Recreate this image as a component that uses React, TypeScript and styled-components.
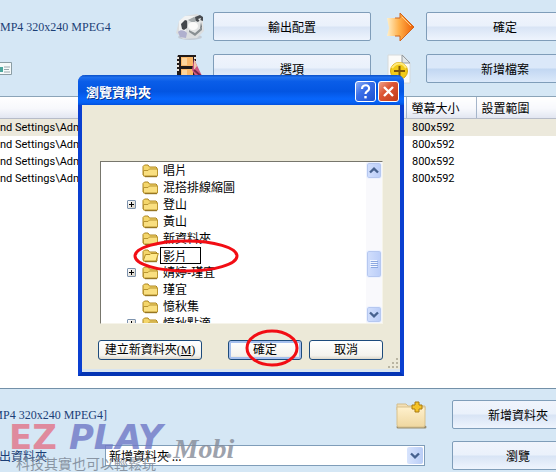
import React from "react";
import styled, { createGlobalStyle, css } from "styled-components";

const ui = `Roboto, "Noto Sans CJK TC", sans-serif`;
const cjk = `"Noto Sans CJK TC", sans-serif`;
const ming = `"Liberation Serif", "Noto Sans CJK TC", serif`;

const GlobalStyle = createGlobalStyle`
  * { box-sizing: border-box; }
  body { margin: 0; background: #d5e7f5; overflow: hidden; }
  button, input, select { font: inherit; color: inherit; margin: 0; }
`;

const Page = styled.div`
  position: relative;
  min-height: 100vh;
  overflow: hidden;
  font: 12px/16px ${cjk};
  color: #000;
  background: #d5e7f5;
`;

/* The main window runs past the right edge of the view. */
const MainWindow = styled.main`
  width: calc(100% + 28px);
`;

const TopPanel = styled.section`
  display: grid;
  grid-template-columns: 176px 37px 1fr 55px 1fr;
  grid-auto-rows: 29px;
  row-gap: 13px;
  height: 96px;
  padding-top: 12px;
  align-content: start;
  align-items: center;
`;

const Profile = styled.span`
  font: 12px/16px ${ming};
  color: #1c3f77;
  white-space: nowrap;
`;

const IconCell = styled.span`
  display: flex;
  padding-left: ${(p: { $pad?: number }) => p.$pad ?? 0}px;
`;

const PanelButton = styled.button<{ $active?: boolean }>`
  width: 100%;
  height: 29px;
  padding: 0;
  border: 1px solid #7f9db9;
  border-radius: 2px;
  line-height: 16px;
  background: ${(p) =>
    p.$active
      ? "linear-gradient(#dbe8f9 0, #dbe8f9 48%, #c2d7f2 52%, #dbe9fa 100%)"
      : "linear-gradient(#f0f4fc 0, #eaf1fb 48%, #d8e4f5 52%, #eef4fd 100%)"};
`;

const TableArea = styled.section`
  height: 293px;
  border-top: 1px solid #8ba4b8;
  border-bottom: 1px solid #7390a8;
  background: #fff;
`;

const Table = styled.table`
  width: 100%;
  border-collapse: collapse;
  table-layout: fixed;
`;

const Th = styled.th`
  height: 21px;
  padding: 1px 0 0 5px;
  font-weight: 400;
  text-align: left;
  background: linear-gradient(#fff, #f7f8fc 55%, #e2e6f1);
  border-bottom: 1px solid #b7bcc8;
  & + & { border-left: 1px solid #a5b5ca; }
`;

const Td = styled.td`
  height: 17px;
  padding: 0 0 0 ${(p: { $pad?: number }) => p.$pad ?? 0}px;
  font: 11px/17px ${ui};
  white-space: nowrap;
`;

const Tr = styled.tr<{ $selected?: boolean }>`
  background: ${(p) => (p.$selected ? "#ece9dc" : "#fff")};
`;

const BottomPanel = styled.section`
  padding: 11px 0 3px;
  display: grid;
  row-gap: 12px;
`;

const FolderRow = styled.div`
  display: grid;
  grid-template-columns: 1fr 56px 132px;
  align-items: center;
`;

const OutputRow = styled.div`
  display: grid;
  grid-template-columns: 105px 1fr 27px 132px;
  align-items: center;
  & > button { grid-column: 4; }
`;

const ClippedLabel = styled.div<{ $width: number }>`
  width: ${(p) => p.$width}px;
  display: flex;
  justify-content: flex-end;
  overflow: hidden;
  white-space: nowrap;
  color: #1c3f77;
`;

const Combo = styled.div`
  position: relative;
  display: flex;
  height: 21px;
`;

const Select = styled.select`
  width: 100%;
  appearance: none;
  border: 1px solid #7f9db9;
  border-radius: 0;
  background: #fff;
  padding: 0 20px 0 3px;
  line-height: 18px;
`;

const ComboArrow = styled.span`
  position: absolute;
  right: 2px;
  top: 2px;
  bottom: 2px;
  width: 16px;
  display: grid;
  place-items: center;
  pointer-events: none;
  background: linear-gradient(90deg, #d8e4fd, #b9cdf6);
  border-radius: 2px;
`;

const Watermark = styled.div`
  position: absolute;
  left: 9px;
  top: 421px;
  width: 240px;
  pointer-events: none;
  white-space: nowrap;
`;

const Brand = styled.div`
  display: flex;
  align-items: flex-start;
  height: 32px;
  line-height: 32px;
  font-family: "DejaVu Sans", sans-serif;
  font-weight: 700;
`;
const BrandEZ = styled.span`
  font-size: 34px;
  color: #e46478;
  opacity: 0.7;
`;
const BrandPlay = styled.span`
  margin-left: 12px;
  font-size: 34px;
  font-style: oblique;
  color: #6f79c6;
  opacity: 0.8;
`;
const BrandMobi = styled.span`
  padding: 12px 0 0 4px;
  font: italic 700 28px/32px "Liberation Serif", serif;
  color: #858b98;
  opacity: 0.8;
`;
const Tagline = styled.div`
  padding-left: 7px;
  font: 14px/20px ${cjk};
  color: #7c8795;
  opacity: 0.85;
`;

const Dialog = styled.section`
  position: absolute;
  left: 78px;
  top: 75px;
  width: 326px;
  border-radius: 7px 7px 0 0;
  background: #ece9d8;
  border: solid #0a3fd0;
  border-width: 0 4px 4px;
  border-bottom-color: #0434b4;
`;

const TitleBar = styled.header`
  display: flex;
  align-items: center;
  gap: 2px;
  height: 30px;
  margin: 0 -4px;
  padding: 3px 5px 0 8px;
  border-radius: 7px 7px 0 0;
  background: linear-gradient(#0a50c8 0, #1f70ee 8%, #0a5de8 22%, #0355e2 55%, #0866fc 80%, #0560f2 92%, #0350dc 100%);
`;

const Title = styled.h1`
  flex: 1;
  margin: 0;
  font: 700 13px/16px ${cjk};
  color: #fff;
  text-shadow: 1px 1px 0 #0a3590;
`;

const CaptionButton = styled.button<{ $close?: boolean }>`
  width: 21px;
  height: 21px;
  padding: 0;
  display: grid;
  place-items: center;
  border: 1px solid #fff;
  border-radius: 3px;
  background: ${(p) =>
    p.$close
      ? "linear-gradient(135deg, #eda28b, #dd5635 40%, #c03a18)"
      : "linear-gradient(135deg, #8eaef5, #3b6fe8 40%, #1d4fd0)"};
`;

const DialogBody = styled.div`
  padding: 56px 17px 9px 16px;
  border-bottom: 3px solid #d9e5f0;
`;

const TreeBox = styled.div`
  display: flex;
  height: 163px;
  margin-left: 2px;
  border: 1px solid #f6f4ea;
  border-top-color: #77766c;
  border-left-color: #77766c;
  background: #fff;
  overflow: hidden;
`;

const Tree = styled.ul`
  flex: 1;
  margin: 0;
  padding: 0 0 0 26px;
  list-style: none;
  overflow: hidden;
`;

const TreeItem = styled.li`
  display: grid;
  grid-template-columns: 15px 17px 1fr;
  align-items: center;
  height: 17px;
  line-height: 16px;
`;

const TreeText = styled.span`
  height: 17px;
  padding-left: 4px;
  white-space: nowrap;
`;

const RenameInput = styled.input`
  width: 41px;
  height: 17px;
  margin-left: 1px;
  padding: 0 2px;
  border: 1px solid #000;
  border-radius: 0;
  background: #fff;
  line-height: 14px;
  outline: none;
`;

const Expander = styled.button`
  width: 9px;
  height: 9px;
  padding: 0;
  display: grid;
  place-items: center;
  border: 1px solid #7d93ae;
  border-radius: 1px;
  background: linear-gradient(135deg, #fff, #d5d0c4);
`;

const ScrollTrack = styled.div`
  width: 16px;
  display: flex;
  flex-direction: column;
  background: #f9f9fc;
`;

const scrollPart = css`
  padding: 0;
  display: grid;
  place-items: center;
  border: 1px solid #eef3ff;
  border-radius: 3px;
  background: linear-gradient(90deg, #d2dffc, #bacdf8);
  box-shadow: inset 0 0 0 1px #b6c8f0;
`;
const ScrollButton = styled.button`
  ${scrollPart}
  height: 17px;
`;
const ScrollThumb = styled.div`
  ${scrollPart}
  height: 28px;
  margin: 71px 0 auto;
`;

const Actions = styled.footer`
  display: grid;
  grid-template-columns: 104px 1fr 74px 74px;
  column-gap: 7px;
  margin-top: 16px;
  & > :nth-child(2) { grid-column: 3; }
`;

const XpButton = styled.button<{ $default?: boolean }>`
  height: 20px;
  padding: 0;
  border: 1px solid #1d4b7c;
  border-radius: 3px;
  background: linear-gradient(#fff, #f4f3ee 80%, #dcd8cc);
  box-shadow: ${(p) => (p.$default ? "inset 0 0 0 2px #a6c0ee" : "none")};
  font: 12px/16px ${ming};
  white-space: nowrap;
`;

const Grip = styled.svg`
  position: absolute;
  right: 1px;
  bottom: 3px;
`;

const Mark = styled.svg<{ $x: number; $y: number }>`
  position: absolute;
  left: ${(p) => p.$x}px;
  top: ${(p) => p.$y}px;
  pointer-events: none;
`;

const Chevron = ({ up = false }: { up?: boolean }) => (
  <svg width="10" height="7" viewBox="0 0 10 7">
    <path d={up ? "M1 5.5 5 1.7 9 5.5" : "M1 1.5 5 5.3 9 1.5"} fill="none" stroke="#47628f" strokeWidth="2.4" />
  </svg>
);

const FolderIcon = ({ open = false }: { open?: boolean }) => (
  <svg width="17" height="15" viewBox="0 0 17 15">
    <path d="M1 12V3.5L2.500 2H6l1.500 2H14l1 1v8H2z" fill="#f4d66b" stroke="#ae8620" />
    {open ? (
      <path d="M1.200 13 3.500 6.500H8L9 5.500h7.300L14 13z" fill="#ffe98c" stroke="#b48e25" />
    ) : (
      <path d="M1.500 13V7.500H6L7.500 6H15.500v7z" fill="#f9df80" stroke="#b99530" />
    )}
    <path d="M3 13.700h12" stroke="#8c6b16" />
  </svg>
);

const CameraIcon = () => (
  <svg width="31" height="28" viewBox="0 0 31 28">
    <ellipse cx="14" cy="24" rx="12" ry="3" fill="#c3cbd4" />
    <path d="M0 20 3 8l6-5 12-2 5 3 2 14-7 7-14 1z" fill="#dcdedf" />
    <path d="m3 8 6-5 10 0-8 7-2 11-6-3z" fill="#f2f3f3" />
    <path d="m5 11 4-4 3 1-1 7-3 2-2-1z" fill="#44484c" />
    <path d="M2 19c2-3 7-2 9 1l-1 5-6-1z" fill="#b0b0ce" />
    <path d="m11 7 9-3 7 4v9l-8 6-7-5z" fill="#e2e4e4" />
    <path d="m12 7 6-3 5 2-6 4z" fill="#a4aaac" />
    <ellipse cx="17" cy="13" rx="5" ry="4" fill="#fbfbfa" />
    <path d="m19 4 5-2 3 2v4l-3-1-2 2-2-1z" fill="#484c50" />
    <path d="m22 6 3-1-1 3z" fill="#e9ecec" />
    <path d="m13 17 6 3 7-6v3l-7 6-6-4z" fill="#898f92" />
    <path d="m25 9 1 5-2 2z" fill="#6f7578" />
  </svg>
);

const FilmIcon = () => (
  <svg width="28" height="28" viewBox="0 0 28 28">
    <path d="M2 0h18v28H1V3z" fill="#211a18" />
    <path d="M5 2h12v9H5zM5 14h12v10H5z" fill="#fbb869" />
    <path d="M6 3h5v7H6zM6 15h5v7H6z" fill="#ffd59b" />
    <path d="M1 3h2M1 7h2M1 11h2M1 15h2M18 3h2M18 7h2M18 11h2" stroke="#eee5d8" strokeWidth="2" />
    <path d="m18 4 9 19-4 5-7-13z" fill="#cf5a83" />
    <path d="m18 4 3 7-3 4z" fill="#f0c8af" />
    <path d="m18 15 7 6" stroke="#742747" strokeWidth="2" />
  </svg>
);

const ArrowIcon = () => (
  <svg width="28" height="30" viewBox="0 0 28 30">
    <defs>
      <linearGradient id="arrow">
        <stop offset="0" stopColor="#fff0ca" />
        <stop offset=".45" stopColor="#ffb04a" />
        <stop offset="1" stopColor="#ee5f04" />
      </linearGradient>
    </defs>
    <path d="M0 6h13V1l14 14-14 14v-5H0l2-8z" fill="url(#arrow)" />
    <path d="M8 6h5V1l14 14-14 14v-5H8" fill="none" stroke="#d0641d" />
    <path d="m15 5 9 9" stroke="#ffd08b" />
  </svg>
);

const AddFileIcon = () => (
  <svg width="25" height="30" viewBox="0 0 25 30">
    <path d="M1 1h15l7 8v20H1z" fill="#fbfbf9" stroke="#d6dadb" />
    <path d="M15 1v8h8z" fill="#e3e7e8" stroke="#929ba1" />
    <circle cx="12" cy="17" r="8.500" fill="#f1ca19" stroke="#d8a910" />
    <path d="M5 14c4-6 11-6 14 0" fill="none" stroke="#ffe979" strokeWidth="2" />
    <path d="M7 17h11M12.500 12v10" stroke="#7d5708" strokeWidth="2" />
  </svg>
);

const AddFolderIcon = () => (
  <svg width="31" height="28" viewBox="0 0 31 28">
    <defs>
      <linearGradient id="folder" x2="0" y2="1">
        <stop stopColor="#fff1cd" />
        <stop offset="1" stopColor="#efd7a0" />
      </linearGradient>
    </defs>
    <path d="M2 26h27" stroke="#998c6c" strokeWidth="3" strokeLinecap="round" />
    <path d="M1 3h9l2 2h17v4H1z" fill="#f3e0b6" stroke="#d3bd8c" />
    <path d="M1 6h28v18l-1 2H2l-1-2z" fill="url(#folder)" stroke="#d8c18b" />
    <path d="M19 1h4v3h3v4h-3v3h-4V8h-3V4h3z" fill="#f5c327" stroke="#a87a12" />
  </svg>
);

const CardIcon = () => (
  <svg width="12" height="13" viewBox="0 0 12 13">
    <path d="M0 .5h11.500v12H0" fill="#f6fafa" stroke="#8b9da4" />
    <path d="M0 5h3v5H0" fill="#4ca69d" />
    <path d="M4 5h6M4 7.500h5M4 10h6" stroke="#9aa8ae" />
  </svg>
);

const folders = [
  { name: "唱片" },
  { name: "混搭排線縮圖" },
  { name: "登山", expandable: true },
  { name: "黃山" },
  { name: "新資料夾" },
  { name: "影片", editing: true },
  { name: "婧婷-瑾宜", expandable: true },
  { name: "瑾宜" },
  { name: "憶秋集" },
  { name: "憶秋點滴", expandable: true },
];

function BrowseDialog() {
  return (
    <Dialog role="dialog" aria-labelledby="dialog-title">
      <TitleBar>
        <Title id="dialog-title">瀏覽資料夾</Title>
        <CaptionButton aria-label="說明">
          <svg width="15" height="17" viewBox="0 0 15 17">
            <path d="M4 6c0-5 8-5 7 0 0 2-3.500 2.500-3.500 5" fill="none" stroke="#fff" strokeWidth="2.200" />
            <path d="M6.300 13h2.400v2.400H6.300z" fill="#fff" />
          </svg>
        </CaptionButton>
        <CaptionButton $close aria-label="關閉">
          <svg width="13" height="13" viewBox="0 0 13 13">
            <path d="m2 2 9 9m0-9-9 9" stroke="#fff" strokeWidth="2.400" />
          </svg>
        </CaptionButton>
      </TitleBar>
      <DialogBody>
        <TreeBox>
          <Tree>
            {folders.map((f) => (
              <TreeItem key={f.name}>
                {f.expandable ? (
                  <Expander aria-label={`展開 ${f.name}`}>
                    <svg width="7" height="7" viewBox="0 0 7 7">
                      <path d="M1 3.500h5M3.500 1v5" stroke="#000" />
                    </svg>
                  </Expander>
                ) : (
                  <span />
                )}
                <FolderIcon open={f.editing} />
                {f.editing ? (
                  <RenameInput aria-label="資料夾名稱" defaultValue={f.name} />
                ) : (
                  <TreeText>{f.name}</TreeText>
                )}
              </TreeItem>
            ))}
          </Tree>
          <ScrollTrack>
            <ScrollButton aria-label="向上捲動"><Chevron up /></ScrollButton>
            <ScrollThumb>
              <svg width="8" height="8" viewBox="0 0 8 8">
                <path d="M0 .5h7M0 2.500h7M0 4.500h7M0 6.500h7" stroke="#f3f7ff" />
                <path d="M1 1.500h7M1 3.500h7M1 5.500h7M1 7.500h7" stroke="#8ca8e0" />
              </svg>
            </ScrollThumb>
            <ScrollButton aria-label="向下捲動"><Chevron /></ScrollButton>
          </ScrollTrack>
        </TreeBox>
        <Actions>
          <XpButton>建立新資料夾(<u>M</u>)</XpButton>
          <XpButton $default>確定</XpButton>
          <XpButton>取消</XpButton>
        </Actions>
      </DialogBody>
      <Grip width="12" height="12" viewBox="0 0 12 12">
        <path d="M9 1h2v2H9zM5 5h2v2H5zM9 5h2v2H9zM1 9h2v2H1zM5 9h2v2H5zM9 9h2v2H9z" fill="#b9b5a2" />
      </Grip>
    </Dialog>
  );
}

export default function App() {
  return (
    <Page>
      <GlobalStyle />
      <MainWindow>
        <TopPanel>
          <Profile>MP4 320x240 MPEG4</Profile>
          <IconCell><CameraIcon /></IconCell>
          <PanelButton>輸出配置</PanelButton>
          <IconCell $pad={16}><ArrowIcon /></IconCell>
          <PanelButton>確定</PanelButton>
          <IconCell><CardIcon /></IconCell>
          <IconCell><FilmIcon /></IconCell>
          <PanelButton>選項</PanelButton>
          <IconCell $pad={16}><AddFileIcon /></IconCell>
          <PanelButton $active>新增檔案</PanelButton>
        </TopPanel>
        <TableArea>
          <Table>
            <colgroup>
              <col />
              <col width="70" />
              <col width="108" />
            </colgroup>
            <thead>
              <tr>
                <Th aria-label="檔案" />
                <Th>螢幕大小</Th>
                <Th>設置範圍</Th>
              </tr>
            </thead>
            <tbody>
              {[0, 1, 2, 3].map((i) => (
                <Tr key={i} $selected={i === 0}>
                  <Td>nd Settings\Adm</Td>
                  <Td $pad={6}>800x592</Td>
                  <Td />
                </Tr>
              ))}
            </tbody>
          </Table>
        </TableArea>
        <BottomPanel>
          <FolderRow>
            <ClippedLabel $width={107}><Profile>MP4 320x240 MPEG4]</Profile></ClippedLabel>
            <IconCell><AddFolderIcon /></IconCell>
            <PanelButton>新增資料夾</PanelButton>
          </FolderRow>
          <OutputRow>
            <ClippedLabel $width={47} as="label" htmlFor="output">出資料夾</ClippedLabel>
            <Combo>
              <Select id="output"><option>新增資料夾 ...</option></Select>
              <ComboArrow><Chevron /></ComboArrow>
            </Combo>
            <PanelButton>瀏覽</PanelButton>
          </OutputRow>
        </BottomPanel>
      </MainWindow>
      <Watermark>
        <Brand>
          <BrandEZ>EZ</BrandEZ>
          <BrandPlay>PLAY</BrandPlay>
          <BrandMobi>.Mobi</BrandMobi>
        </Brand>
        <Tagline>科技其實也可以輕鬆玩</Tagline>
      </Watermark>
      <BrowseDialog />
      <Mark $x={133} $y={238} width="106" height="36">
        <ellipse cx="53" cy="18" rx="51" ry="15" fill="none" stroke="#f20d14" strokeWidth="3" />
      </Mark>
      <Mark $x={244} $y={328} width="56" height="40">
        <ellipse cx="28" cy="20" rx="25" ry="17" fill="none" stroke="#f20d14" strokeWidth="3" />
      </Mark>
    </Page>
  );
}
